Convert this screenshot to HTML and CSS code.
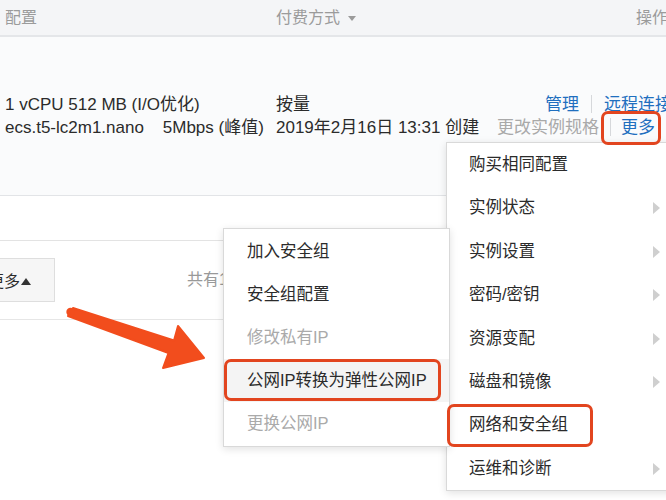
FILE: index.html
```html
<!DOCTYPE html>
<html lang="zh-CN">
<head>
<meta charset="utf-8">
<title>ECS 实例</title>
<link rel="stylesheet" href="styles.css">
</head>
<body>
<div class="page">
  <div class="thead">
    <div class="th">配置</div>
    <div class="th">付费方式 <span class="caret"></span></div>
    <div class="th th-ops">操作</div>
  </div>
  <div class="trow">
    <div class="cell">
      <div class="line">1 vCPU 512 MB (I/O优化)</div>
      <div class="line">ecs.t5-lc2m1.nano&nbsp;&nbsp;&nbsp; 5Mbps (峰值)</div>
    </div>
    <div class="cell">
      <div class="line">按量</div>
      <div class="line">2019年2月16日 13:31 创建</div>
    </div>
    <div class="cell ops">
      <div class="line ops-1"><span class="link">管理</span><span class="sep"></span><span class="link">远程连接</span></div>
      <div class="line"><span class="muted">更改实例规格</span><span class="sep sep-2"></span><span class="link">更多</span><span class="dd"></span></div>
    </div>
  </div>
  <div class="spacer"></div>
  <div class="pager">
    <div class="more-btn">更多<span class="up"></span></div>
    <div class="total">共有1条</div>
  </div>

  <div class="menu menu-main">
    <div class="mi">购买相同配置</div>
    <div class="mi sub">实例状态</div>
    <div class="mi sub">实例设置</div>
    <div class="mi sub">密码/密钥</div>
    <div class="mi sub">资源变配</div>
    <div class="mi sub">磁盘和镜像</div>
    <div class="mi">网络和安全组</div>
    <div class="mi sub">运维和诊断</div>
  </div>

  <div class="menu menu-sub">
    <div class="si">加入安全组</div>
    <div class="si">安全组配置</div>
    <div class="si disabled">修改私有IP</div>
    <div class="si hover">公网IP转换为弹性公网IP</div>
    <div class="si disabled">更换公网IP</div>
  </div>

  <div class="anno anno-more"></div>
  <div class="anno anno-eip"></div>
  <div class="anno anno-net"></div>

  <svg class="arrow" width="666" height="500" viewBox="0 0 666 500">
    <path d="M73 308 L174 340.5 L178 326 L204 358 L163 368 L168.5 353 L68 316 Z" fill="#f24d1d" stroke="#f24d1d" stroke-width="2" stroke-linejoin="round"/>
    <circle cx="70.5" cy="312" r="4.2" fill="#f24d1d"/>
  </svg>
</div>
</body>
</html>
```
FILE: styles.css
```css
* { box-sizing: border-box; }
html, body { margin: 0; padding: 0; background: #fff; }
body {
  width: 666px;
  height: 500px;
  overflow: hidden;
  font-family: "Liberation Sans", "Noto Sans CJK SC", sans-serif;
  color: #2b2b2b;
}
.page {
  position: relative;
  width: 666px;
  height: 500px;
  overflow: hidden;
}

/* table header */
.thead {
  display: grid;
  grid-template-columns: 271px 221px 1fr;
  padding-left: 5px;
  height: 37px;
  align-items: center;
  background: #f4f5f7;
  border-bottom: 2px solid #e4e6e9;
  font-size: 16px;
  color: #9b9b9b;
  white-space: nowrap;
}
.th { padding-bottom: 3px; }
.th-ops { padding-left: 139px; }
.caret {
  display: inline-block;
  width: 0;
  height: 0;
  margin-left: 4px;
  vertical-align: middle;
  border-left: 4px solid transparent;
  border-right: 4px solid transparent;
  border-top: 5px solid #9b9b9b;
}

/* table row */
.trow {
  display: grid;
  grid-template-columns: 271px 221px 1fr;
  padding-left: 5px;
  height: 159px;
  align-items: center;
  background: #fafbfc;
  border-bottom: 1px solid #e2e4e7;
  font-size: 17px;
  white-space: nowrap;
}
.line { line-height: 23px; }
.ops-1 { padding-left: 48px; }
.link { color: #1f6fbf; }
.muted { color: #a9a9a9; }
.sep {
  display: inline-block;
  width: 1px;
  height: 18px;
  margin: 0 12px;
  vertical-align: -3px;
  background: #d6d8db;
}
.sep-2 { margin: 0 10px 0 11px; }
.dd {
  display: inline-block;
  width: 0;
  height: 0;
  margin-left: 13px;
  vertical-align: middle;
  border-left: 3px solid transparent;
  border-right: 3px solid transparent;
  border-top: 4px solid #555;
}

/* footer */
.spacer {
  height: 45px;
  border-bottom: 1px solid #e3e3e3;
}
.pager {
  display: flex;
  align-items: center;
  height: 79px;
  border-bottom: 1px solid #e6e6e6;
  white-space: nowrap;
}
.more-btn {
  margin-left: -21px;
  width: 76px;
  height: 44px;
  display: flex;
  align-items: center;
  justify-content: flex-end;
  padding-right: 23px;
  background: #f6f6f6;
  border: 1px solid #dedede;
  font-size: 16px;
  color: #2b2b2b;
}
.up {
  display: inline-block;
  width: 0;
  height: 0;
  margin-left: 1px;
  margin-top: 3px;
  border-left: 5px solid transparent;
  border-right: 5px solid transparent;
  border-bottom: 7px solid #333;
}
.total {
  margin-left: 132px;
  font-size: 16px;
  color: #999;
  margin-top: -4px;
}

/* menus */
.menu {
  position: absolute;
  background: #fff;
  border: 1px solid #d9d9d9;
  box-shadow: 0 2px 8px rgba(0, 0, 0, 0.12);
  font-size: 16.5px;
  color: #2b2b2b;
  white-space: nowrap;
}
.menu-main {
  left: 446px;
  top: 142px;
  width: 240px;
  height: 349px;
}
.mi {
  position: relative;
  height: 43.4px;
  line-height: 43.4px;
  padding-left: 22px;
}
.mi.sub::after {
  content: "";
  position: absolute;
  left: 206px;
  top: 16px;
  width: 0;
  height: 0;
  border-left: 7px solid #cfcfcf;
  border-top: 6px solid transparent;
  border-bottom: 6px solid transparent;
}
.menu-sub {
  left: 223px;
  top: 228px;
  width: 227px;
  height: 219px;
  padding-top: 1px;
  z-index: 2;
}
.si {
  height: 43px;
  line-height: 43px;
  padding-left: 23px;
}
.si.disabled { color: #aaa; }
.si.hover { background: #f4f4f4; }

/* annotations */
.anno {
  position: absolute;
  border: 3px solid #e2451f;
  border-radius: 7px;
  z-index: 3;
}
.anno-more { left: 601px; top: 111px; width: 60px; height: 34px; }
.anno-eip { left: 224px; top: 359px; width: 217px; height: 42px; }
.anno-net { left: 447px; top: 404px; width: 146px; height: 43px; }

.arrow {
  position: absolute;
  left: 0;
  top: 0;
  z-index: 1;
}
```
